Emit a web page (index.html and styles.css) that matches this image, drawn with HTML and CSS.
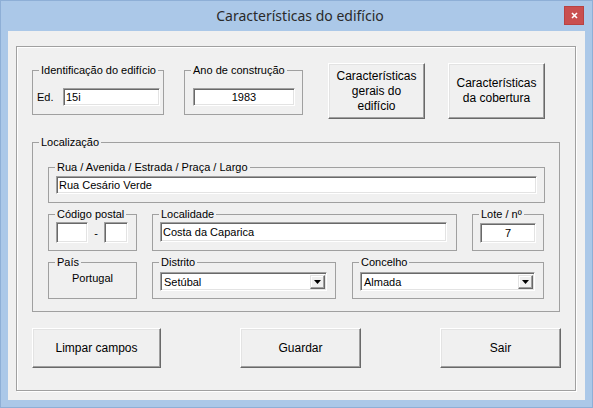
FILE: index.html
```html
<!DOCTYPE html>
<html lang="pt">
<head>
<meta charset="utf-8">
<title>Características do edifício</title>
<link rel="stylesheet" href="styles.css">
</head>
<body>
<div class="window">
  <div class="titlebar">
    <div class="title">Características do edifício</div>
    <div class="close">
      <svg width="7" height="7" viewBox="0 0 7 7"><path d="M1 1L6 6M6 1L1 6" stroke="#fff" stroke-width="1.6" fill="none"/></svg>
    </div>
  </div>
  <div class="client">
    <div class="frame">
      <div class="top-row">
        <fieldset class="grp grp-id">
          <legend>Identificação do edifício</legend>
          <div class="grp-body body-id">
            <span class="lbl">Ed.</span>
            <div class="input in-id">15i</div>
          </div>
        </fieldset>
        <fieldset class="grp grp-ano">
          <legend>Ano de construção</legend>
          <div class="grp-body body-ano">
            <div class="input in-ano center">1983</div>
          </div>
        </fieldset>
        <button class="btn btn-top btn-gerais">Características<br>gerais do<br>edifício</button>
        <button class="btn btn-top btn-cob">Características<br>da cobertura</button>
      </div>

      <fieldset class="grp grp-loc">
        <legend>Localização</legend>
        <div class="loc-body">
          <fieldset class="grp grp-rua">
            <legend>Rua / Avenida / Estrada / Praça / Largo</legend>
            <div class="grp-body body-row">
              <div class="input in-rua">Rua Cesário Verde</div>
            </div>
          </fieldset>

          <div class="loc-row">
            <fieldset class="grp grp-cp">
              <legend>Código postal</legend>
              <div class="grp-body body-row">
                <div class="input in-cp1"></div>
                <span class="dash">-</span>
                <div class="input in-cp2"></div>
              </div>
            </fieldset>
            <fieldset class="grp grp-local">
              <legend>Localidade</legend>
              <div class="grp-body body-row">
                <div class="input in-local">Costa da Caparica</div>
              </div>
            </fieldset>
            <fieldset class="grp grp-lote">
              <legend>Lote / nº</legend>
              <div class="grp-body body-row">
                <div class="input in-lote center">7</div>
              </div>
            </fieldset>
          </div>

          <div class="loc-row">
            <fieldset class="grp grp-pais">
              <legend>País</legend>
              <div class="grp-body body-pais">Portugal</div>
            </fieldset>
            <fieldset class="grp grp-dist">
              <legend>Distrito</legend>
              <div class="grp-body body-combo">
                <div class="combo combo-dist">
                  <span class="combo-text">Setúbal</span>
                  <span class="combo-btn"><svg width="7" height="4" viewBox="0 0 7 4"><path d="M0 0H7L3.5 4Z" fill="#000"/></svg></span>
                </div>
              </div>
            </fieldset>
            <fieldset class="grp grp-conc">
              <legend>Concelho</legend>
              <div class="grp-body body-combo">
                <div class="combo combo-conc">
                  <span class="combo-text">Almada</span>
                  <span class="combo-btn"><svg width="7" height="4" viewBox="0 0 7 4"><path d="M0 0H7L3.5 4Z" fill="#000"/></svg></span>
                </div>
              </div>
            </fieldset>
          </div>
        </div>
      </fieldset>

      <div class="bottom-row">
        <button class="btn btn-bottom btn-limpar">Limpar campos</button>
        <button class="btn btn-bottom btn-guardar">Guardar</button>
        <button class="btn btn-bottom btn-sair">Sair</button>
      </div>
    </div>
  </div>
</div>
</body>
</html>
```
FILE: styles.css
```css
* { box-sizing: border-box; }

html, body {
  margin: 0;
  padding: 0;
  background: #abc8e8;
}

body {
  font-family: "Liberation Sans", Arial, sans-serif;
  font-size: 11px;
  color: #000;
}

.window {
  width: 593px;
  height: 408px;
  background: #abc8e8;
  border: 1px solid #8eafd6;
  display: flex;
  flex-direction: column;
}

.titlebar {
  height: 30px;
  display: flex;
  align-items: flex-start;
  flex: none;
}

.title {
  flex: 1;
  padding-left: 35px;
  text-align: center;
  font-family: "Noto Sans", "Open Sans", sans-serif;
  font-size: 14px;
  line-height: 29px;
  color: #2a2a2a;
}

.close {
  margin-right: 8px;
  margin-top: 5px;
  width: 20px;
  height: 19px;
  background: #c94f4f;
  border: 1px solid #b84242;
  display: flex;
  align-items: center;
  justify-content: center;
  flex: none;
}

.client {
  flex: 1;
  margin: 0 7px 7px 7px;
  background: #f0f0f0;
  display: flex;
  flex-direction: column;
}

.frame {
  flex: 1;
  margin: 15px 9px 9px 8px;
  border: 1px solid #a0a0a0;
  box-shadow: 1px 1px 0 #fff, inset 1px 1px 0 #fff;
  display: flex;
  flex-direction: column;
}

/* group boxes */
.grp {
  margin: 0;
  padding: 0;
  min-width: 0;
  border: 1px solid #a0a0a0;
  flex: none;
}

.grp > legend {
  margin-left: 6px;
  padding: 0 2px;
  font-size: 11px;
  line-height: 13px;
  color: #000;
}

.grp-body {
  display: flex;
  align-items: flex-start;
}

/* top row */
.top-row {
  display: flex;
  align-items: flex-start;
  padding: 16px 0 0 15px;
}

.grp-id {
  width: 132px;
  height: 51px;
  margin-top: 1px;
}

.body-id {
  padding: 11px 3px 0 4px;
  justify-content: space-between;
  align-items: center;
}

.lbl {
  line-height: 18px;
}

.grp-ano {
  width: 119px;
  height: 51px;
  margin-top: 1px;
  margin-left: 20px;
}

.body-ano {
  padding: 11px 0 0 8px;
}

.input {
  background: #fff;
  border: 1px solid;
  border-color: #a0a0a0 #fff #fff #a0a0a0;
  box-shadow: inset 1px 1px 0 #696969, inset -1px -1px 0 #e3e3e3;
  padding: 0 2px;
  font-size: 11px;
  white-space: nowrap;
  overflow: hidden;
}

.center { text-align: center; }

.in-id { width: 97px; height: 18px; line-height: 16px; }
.in-ano { width: 102px; height: 18px; line-height: 16px; }

.btn {
  background: #f0f0f0;
  border: 1px solid;
  border-color: #fff #696969 #696969 #fff;
  box-shadow: inset -1px -1px 0 #a0a0a0, inset 1px 1px 0 #e3e3e3;
  font-family: "Liberation Sans", Arial, sans-serif;
  font-size: 12px;
  color: #000;
  padding: 0;
  margin: 0;
  flex: none;
}

.btn-top {
  width: 97px;
  height: 56px;
  line-height: 15px;
}

.btn-gerais { margin-left: 25px; }
.btn-cob { margin-left: 23px; }

/* localização */
.grp-loc {
  width: 528px;
  height: 176px;
  margin: 17px 0 0 15px;
}

.loc-body {
  padding: 12px 0 0 15px;
}

.grp-rua {
  width: 497px;
  height: 42px;
}

.body-row {
  padding: 2px 0 0 7px;
  align-items: center;
}

.in-rua { width: 481px; height: 18px; line-height: 16px; }

.loc-row {
  display: flex;
  margin-top: 5px;
}

.loc-row .grp { height: 43px; }

.grp-cp { width: 89px; }
.grp-cp .body-row { padding-top: 1px; }
.in-cp1 { width: 32px; height: 21px; }
.in-cp2 { width: 24px; height: 21px; }
.dash {
  width: 16px;
  text-align: center;
  line-height: 20px;
}

.grp-local { width: 305px; margin-left: 15px; }
.grp-local .body-row { padding-top: 1px; }
.in-local { width: 287px; height: 20px; line-height: 18px; }

.grp-lote { width: 72px; margin-left: 15px; }
.in-lote { width: 56px; height: 20px; line-height: 18px; }

.grp-pais { width: 89px; }
.body-pais {
  justify-content: center;
  padding-top: 3px;
  line-height: 13px;
}

.grp-dist { width: 184px; margin-left: 15px; }
.grp-conc { width: 192px; margin-left: 16px; }

.body-combo { padding: 3px 0 0 7px; }

.combo {
  height: 19px;
  background: #fff;
  border: 1px solid;
  border-color: #a0a0a0 #fff #fff #a0a0a0;
  box-shadow: inset 1px 1px 0 #696969, inset -1px -1px 0 #e3e3e3;
  display: flex;
  align-items: stretch;
  padding: 2px 1px 1px 2px;
}

.combo-dist { width: 167px; }
.combo-conc { width: 175px; }

.combo-text {
  flex: 1;
  line-height: 15px;
  padding-left: 1px;
}

.combo-btn {
  width: 15px;
  background: #f0f0f0;
  border: 1px solid;
  border-color: #e3e3e3 #696969 #696969 #e3e3e3;
  box-shadow: inset -1px -1px 0 #a0a0a0, inset 1px 1px 0 #fff;
  display: flex;
  align-items: center;
  justify-content: center;
}

/* bottom row */
.bottom-row {
  display: flex;
  padding: 16px 0 0 15px;
}

.btn-bottom { height: 40px; }
.btn-limpar { width: 129px; }
.btn-guardar { width: 121px; margin-left: 79px; }
.btn-sair { width: 121px; margin-left: 79px; }
```
